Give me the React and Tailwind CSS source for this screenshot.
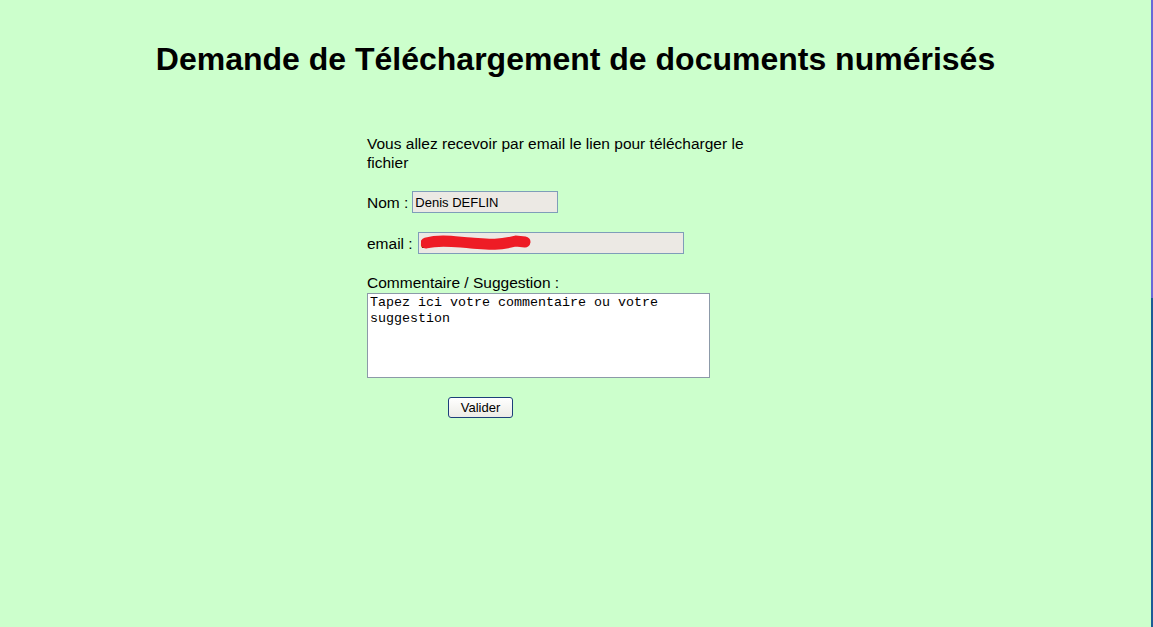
export default function App() {
  return (
    <div className="flex min-h-[627px] w-full bg-[#ccffcc] font-['Liberation_Sans',Arial,sans-serif] text-black">
      <div className="flex-1">
        <h1 className="pt-[40px] text-center text-[32px] font-bold leading-[38px]">
          Demande de Téléchargement de documents numérisés
        </h1>

        <div className="ml-[367px] mt-[56px] w-[385px] text-[15.5px] leading-[19px]">
          <p>Vous allez recevoir par email le lien pour télécharger le fichier</p>

          <div className="mt-[19px] flex items-center">
            <span className="mr-[4px]">Nom :</span>
            <div className="flex h-[22px] w-[146px] items-center border border-[#7f9db9] bg-[#ece9e4] px-[2px] text-[13px]">
              Denis DEFLIN
            </div>
          </div>

          <div className="mt-[19px] flex items-center">
            <span className="mr-[5px]">email :</span>
            <div className="relative flex h-[22px] w-[266px] items-center border border-[#7f9db9] bg-[#ece9e4] px-[2px] text-[13px]">
              <span>d</span>
              <svg className="absolute left-[2px] top-[1px]" width="110" height="18" viewBox="0 0 110 18">
                <path
                  d="M5 9 C 20 5, 35 8, 50 9 S 75 12, 95 7 L 104 8"
                  fill="none"
                  stroke="#ee1c25"
                  strokeWidth="11"
                  strokeLinecap="round"
                />
              </svg>
            </div>
          </div>

          <p className="mt-[19px]">Commentaire / Suggestion :</p>
          <div className="mt-[1px] h-[85px] w-[343px] border border-[#8c9aa8] bg-white px-[2px] pt-[1px] font-['Liberation_Mono','Courier_New',monospace] text-[13.33px] leading-[16px]">
            Tapez ici votre commentaire ou votre
            <br />
            suggestion
          </div>

          <div className="mt-[19px] pl-[81px]">
            <button className="h-[21px] w-[65px] rounded-[3px] border border-[#1c3f7a] bg-gradient-to-b from-white to-[#ecebe6] text-[13px] leading-[19px]">
              Valider
            </button>
          </div>
        </div>
      </div>

      <div className="flex w-[2px] flex-col">
        <div className="h-[298px] bg-[#6868d8]" />
        <div className="flex-1 bg-[#1b5b96]" />
      </div>
    </div>
  );
}
